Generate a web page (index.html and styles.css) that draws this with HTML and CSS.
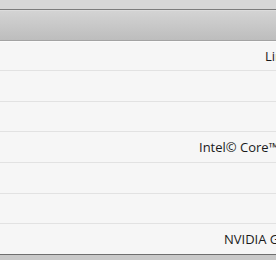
FILE: index.html
```html
<!DOCTYPE html>
<html>
<head>
<meta charset="utf-8">
<link rel="stylesheet" href="styles.css">
</head>
<body>
<div class="window">
  <div class="topbar"></div>
  <div class="header"></div>
  <div class="rows">
    <div class="row"><span class="val v1">Linux Mint 19 Tara</span></div>
    <div class="row"></div>
    <div class="row"></div>
    <div class="row"><span class="val v4">Intel© Core™ i7-4770 CPU @ 3.40GHz × 8</span></div>
    <div class="row"></div>
    <div class="row"></div>
    <div class="row"><span class="val v7">NVIDIA GeForce GTX 760</span></div>
  </div>
  <div class="footer"></div>
</div>
</body>
</html>
```
FILE: styles.css
```css
html, body {
  margin: 0;
  padding: 0;
}
body {
  width: 276px;
  height: 260px;
  overflow: hidden;
  font-family: "Open Sans", "Noto Sans", sans-serif;
  font-size: 13px;
  color: #1a1a1a;
  background: #c9c9c9;
}
.window {
  display: flex;
  flex-direction: column;
  width: 276px;
}
.topbar {
  height: 9px;
  background: #d7d7d7;
  border-bottom: 1px solid #7c7c7c;
}
.header {
  height: 30px;
  background: linear-gradient(#d4d4d4, #bdbdbd);
  border-bottom: 1px solid #a3a3a3;
  box-shadow: inset 0 1px 0 #dcdcdc;
}
.rows {
  border-top: 1px solid #fbfbfb;
  background: #f6f6f6;
}
.row {
  box-sizing: border-box;
  height: 30.67px;
  border-bottom: 1px solid #e2e2e2;
  display: flex;
  align-items: center;
  overflow: hidden;
  white-space: nowrap;
}
.row:first-child {
  height: 29px;
}
.row:last-child {
  border-bottom: 1px solid #6f6f6f;
}
.val {
  flex: none;
}
.v1 { margin-left: 265px; }
.v4 { margin-left: 199px; }
.v7 { margin-left: 224px; }
.footer {
  height: 6px;
  background: #c9c9c9;
}
```
